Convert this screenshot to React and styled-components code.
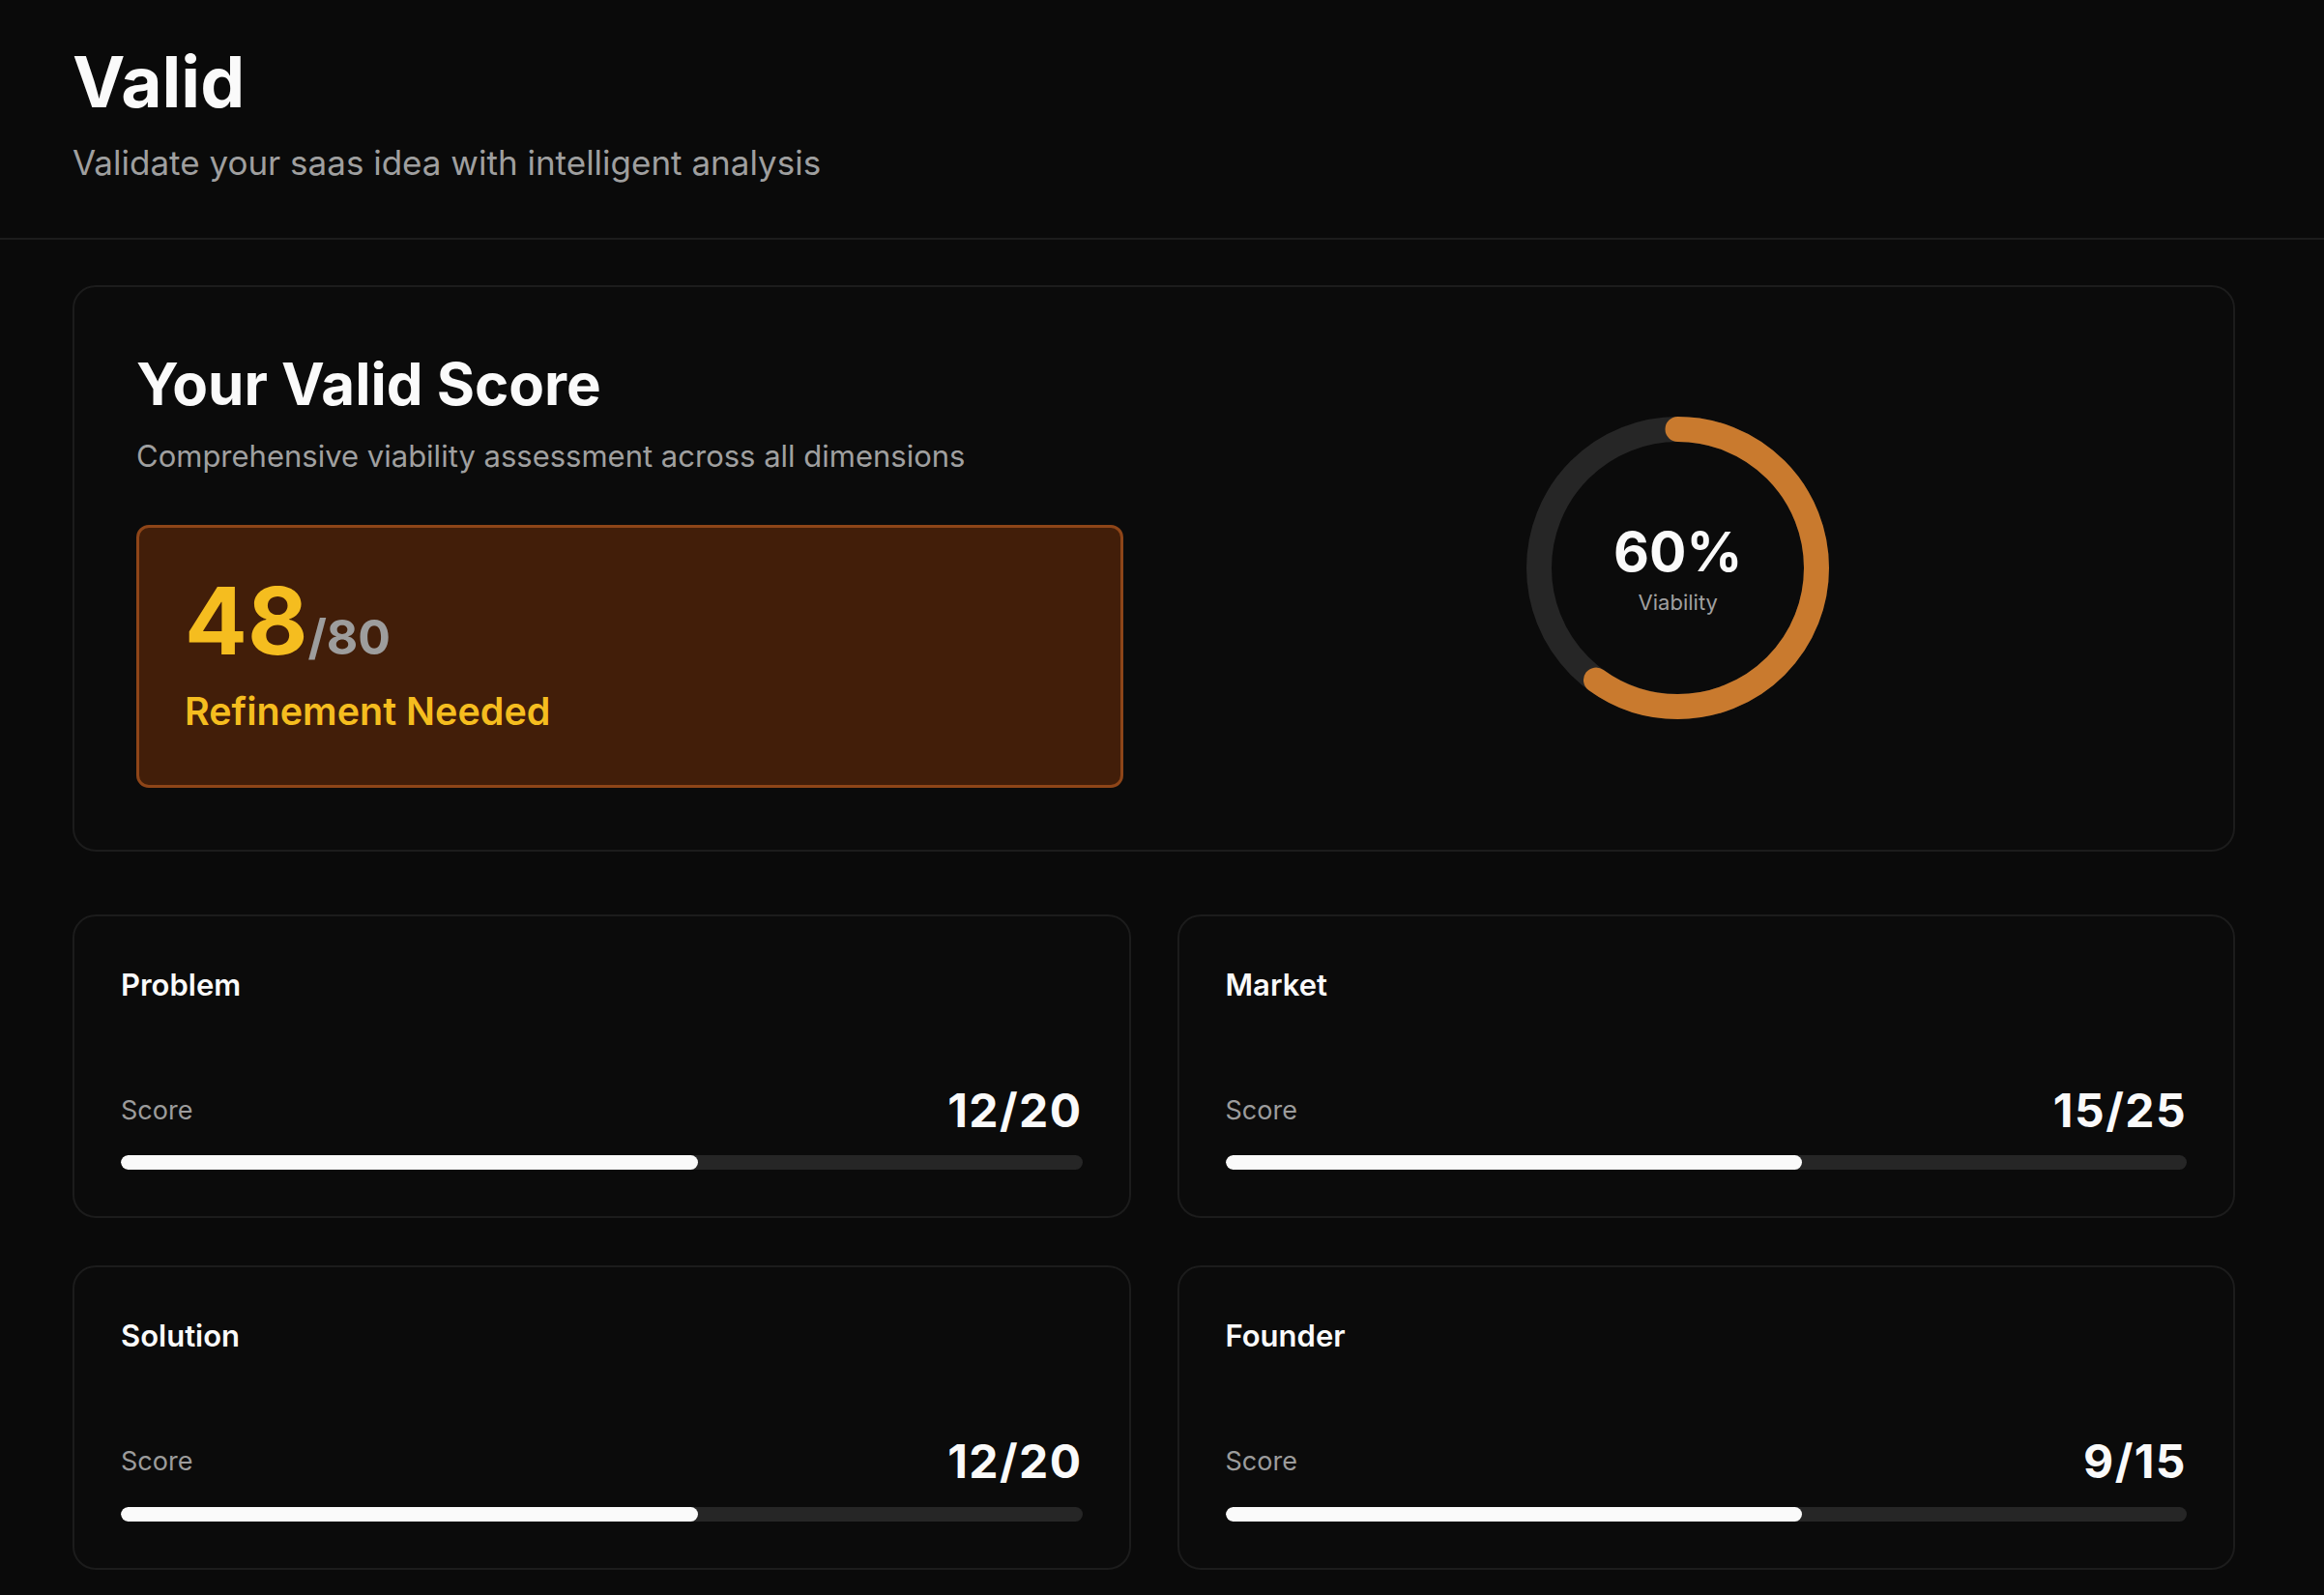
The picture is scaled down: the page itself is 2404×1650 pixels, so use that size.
import styled, { createGlobalStyle } from 'styled-components';

const GlobalStyle = createGlobalStyle`
  html, body {
    margin: 0;
    padding: 0;
    background: #0a0a0a;
  }
  body {
    font-family: Inter, "Noto Sans", "Liberation Sans", sans-serif;
    color: #fafafa;
  }
  * {
    box-sizing: border-box;
  }
`;

const Header = styled.header`
  padding: 48px 75px 51px;
  border-bottom: 2px solid #1c1c1c;
`;

const Title = styled.h1`
  margin: 0;
  font-size: 73px;
  line-height: 1;
  font-weight: 700;
`;

const Subtitle = styled.p`
  margin: 21px 0 0;
  font-size: 35px;
  line-height: 1.5;
  color: #9f9f9f;
`;

const Main = styled.main`
  padding: 47px 92px 64px 75px;
  display: flex;
  flex-direction: column;
  gap: 65px;
`;

const Card = styled.section`
  border: 2px solid #1c1c1c;
  border-radius: 24px;
  background: #0b0b0b;
`;

const ScoreCard = styled(Card)`
  padding: 64px;
  display: grid;
  grid-template-columns: 1fr 1fr;
  gap: 64px;
  align-items: center;
`;

const ScoreTitle = styled.h2`
  margin: 0;
  font-size: 60px;
  line-height: 1.2;
  font-weight: 700;
`;

const ScoreText = styled.p`
  margin: 16px 0 0;
  font-size: 31px;
  line-height: 1.5;
  color: #a0a0a0;
`;

const Verdict = styled.div`
  margin-top: 48px;
  padding: 48px 47px 50px;
  border: 3px solid #8e4518;
  border-radius: 13px;
  background: #421e09;
`;

const Total = styled.div`
  display: flex;
  align-items: baseline;
  line-height: 1;
`;

const Points = styled.span`
  font-size: 96px;
  font-weight: 700;
  color: #f5bd1f;
`;

const OutOf = styled.span`
  font-size: 50px;
  font-weight: 700;
  color: #9d9d9d;
`;

const Status = styled.div`
  margin-top: 21px;
  font-size: 39.5px;
  line-height: 1.3;
  font-weight: 600;
  color: #f5bd1f;
`;

const RingWrap = styled.div`
  justify-self: center;
  position: relative;
  width: 313px;
  height: 313px;
`;

const RingLabel = styled.div`
  position: absolute;
  inset: 0;
  display: flex;
  flex-direction: column;
  align-items: center;
  justify-content: center;
`;

const Percent = styled.span`
  font-size: 57px;
  line-height: 1.1;
  font-weight: 700;
`;

const RingCaption = styled.span`
  margin-top: 8px;
  font-size: 22px;
  color: #a0a0a0;
`;

const Grid = styled.div`
  display: grid;
  grid-template-columns: 1fr 1fr;
  gap: 49px 48px;
`;

const MetricCard = styled(Card)`
  padding: 48px;
`;

const MetricName = styled.h3`
  margin: 0;
  font-size: 31px;
  line-height: 1.5;
  font-weight: 600;
`;

const MetricRow = styled.div`
  margin-top: 77px;
  display: flex;
  justify-content: space-between;
  align-items: center;
`;

const MetricLabel = styled.span`
  font-size: 27px;
  color: #9c9c9c;
`;

const MetricValue = styled.span`
  font-size: 48px;
  line-height: 1.2;
  font-weight: 700;
  letter-spacing: 0.03em;
`;

const Track = styled.div`
  margin-top: 18px;
  height: 15px;
  border-radius: 999px;
  background: #262626;
  overflow: hidden;
`;

const Fill = styled.div`
  height: 100%;
  border-radius: 999px;
  background: #fafafa;
`;

const metrics = [
  { name: 'Problem', score: 12, max: 20 },
  { name: 'Market', score: 15, max: 25 },
  { name: 'Solution', score: 12, max: 20 },
  { name: 'Founder', score: 9, max: 15 },
];

function Ring({ value }) {
  const r = 143.5;
  const c = 2 * Math.PI * r;
  return (
    <RingWrap>
      <svg width="313" height="313" viewBox="0 0 313 313">
        <circle cx="156.5" cy="156.5" r={r} fill="none" stroke="#262626" strokeWidth="26" />
        <circle
          cx="156.5"
          cy="156.5"
          r={r}
          fill="none"
          stroke="#c97a2e"
          strokeWidth="26"
          strokeLinecap="round"
          strokeDasharray={`${(c * value) / 100} ${c}`}
          transform="rotate(-90 156.5 156.5)"
        />
      </svg>
      <RingLabel>
        <Percent>{value}%</Percent>
        <RingCaption>Viability</RingCaption>
      </RingLabel>
    </RingWrap>
  );
}

export default function App() {
  return (
    <>
      <GlobalStyle />
      <Header>
        <Title>Valid</Title>
        <Subtitle>Validate your saas idea with intelligent analysis</Subtitle>
      </Header>
      <Main>
        <ScoreCard>
          <div>
            <ScoreTitle>Your Valid Score</ScoreTitle>
            <ScoreText>Comprehensive viability assessment across all dimensions</ScoreText>
            <Verdict>
              <Total>
                <Points>48</Points>
                <OutOf>/80</OutOf>
              </Total>
              <Status>Refinement Needed</Status>
            </Verdict>
          </div>
          <Ring value={60} />
        </ScoreCard>
        <Grid>
          {metrics.map((m) => (
            <MetricCard key={m.name}>
              <MetricName>{m.name}</MetricName>
              <MetricRow>
                <MetricLabel>Score</MetricLabel>
                <MetricValue>
                  {m.score}/{m.max}
                </MetricValue>
              </MetricRow>
              <Track>
                <Fill style={{ width: `${(m.score / m.max) * 100}%` }} />
              </Track>
            </MetricCard>
          ))}
        </Grid>
      </Main>
    </>
  );
}
